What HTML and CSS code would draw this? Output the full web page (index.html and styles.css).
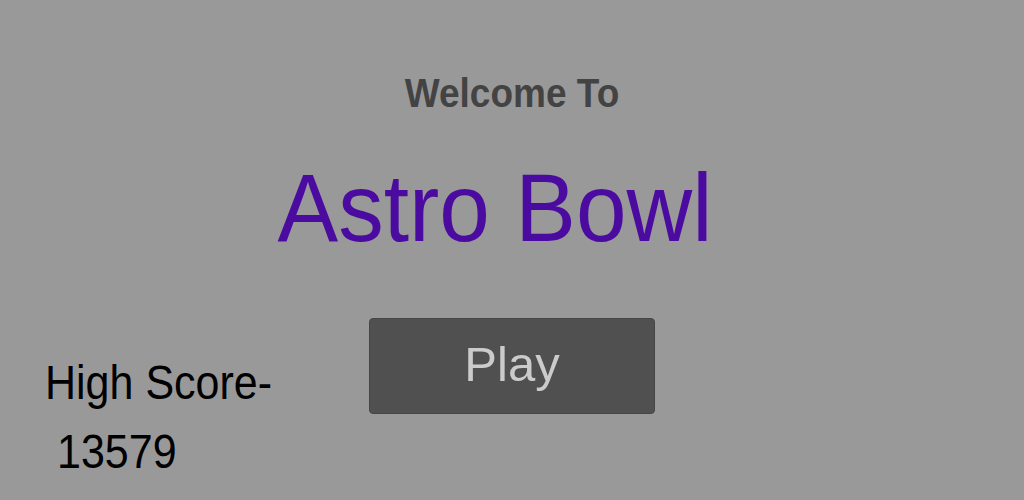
FILE: index.html
```html
<!DOCTYPE html>
<html lang="en">
<head>
    <meta charset="UTF-8">
    <meta name="viewport" content="width=device-width, initial-scale=1.0">
    <title>Astro Bowl</title>
    <link rel="stylesheet" href="styles.css">
</head>
<body>
    <div class="menu">
        <h2 class="welcome">Welcome To</h2>
        <h1 class="title">Astro Bowl</h1>
        <div class="high-score">
            <div class="score-label">High Score-</div>
            <div class="score-value" id="score">13579</div>
        </div>
        <button class="play-button">Play</button>
    </div>
</body>
</html>
```

FILE: styles.css
```css
body {
    margin: 0;
    padding: 0;
    background-color: #999999;
    font-family: "Liberation Sans", Arial, sans-serif;
    overflow: hidden;
}
.menu {
    display: grid;
    grid-template-columns: 1fr auto 1fr;
    grid-template-rows: auto auto auto;
    align-content: start;
    height: 500px;
    padding-top: 76px;
    box-sizing: border-box;
}
.welcome {
    grid-column: 2;
    grid-row: 1;
    justify-self: center;
    margin: 0;
    font-size: 37px;
    line-height: 1;
    font-weight: bold;
    color: #434343;
    transform: scaleY(1.1);
    transform-origin: 50% 85%;
}
.title {
    grid-column: 2;
    grid-row: 2;
    justify-self: center;
    margin: 51px 34px 0 0;
    font-size: 91px;
    line-height: 1;
    font-weight: normal;
    color: #4c0ba0;
    transform: scaleY(1.06);
    transform-origin: 50% 85%;
}
.play-button {
    grid-column: 2;
    grid-row: 3;
    justify-self: center;
    align-self: start;
    margin-top: 63px;
    width: 286px;
    height: 96px;
    background-color: #505050;
    border: 1px solid #464646;
    border-radius: 4px;
    color: #cbcbcb;
    font-family: inherit;
    font-size: 49px;
    line-height: 1;
    padding: 0 0 4px;
    cursor: pointer;
}
/* score sits low on the left, beside the play button */
.high-score {
    grid-column: 1;
    grid-row: 3;
    justify-self: start;
    align-self: start;
    display: flex;
    flex-direction: column;
    margin: 94px 0 0 45px;
    font-size: 43px;
    line-height: 61px;
    color: #000000;
    white-space: nowrap;
    transform: scaleY(1.12);
    transform-origin: 0 0;
}
.score-value {
    padding-left: 12px;
}
```
